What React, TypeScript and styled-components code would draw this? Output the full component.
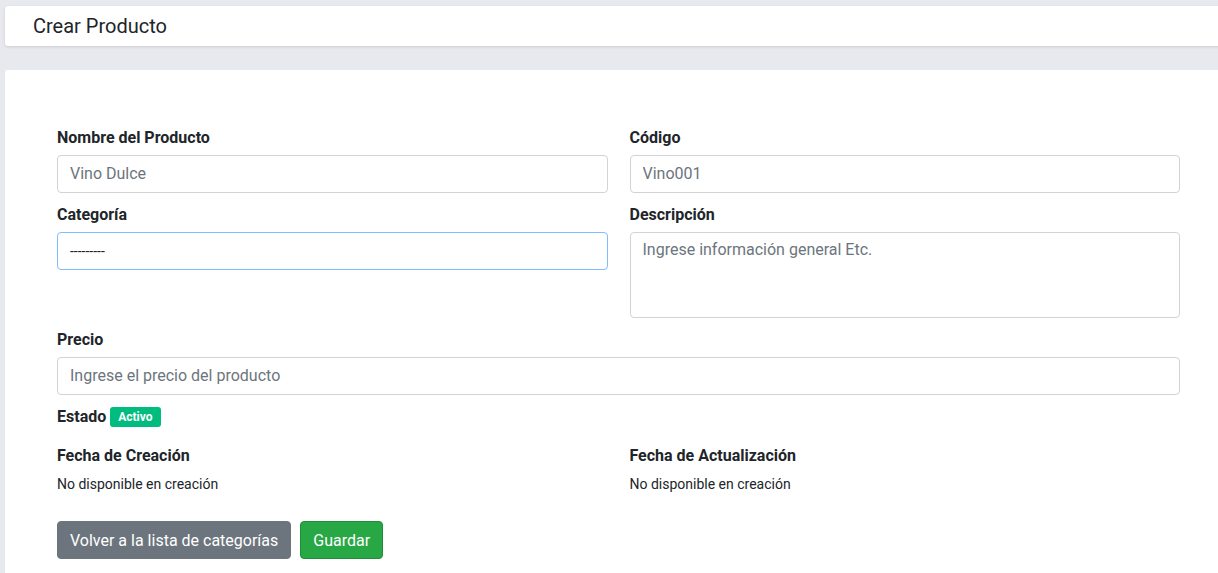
import React from 'react';
import styled, { createGlobalStyle } from 'styled-components';

const GlobalStyle = createGlobalStyle`
  html, body {
    margin: 0;
    padding: 0;
    background: #e8e9ee;
    overflow: hidden;
    font-family: Roboto, "Liberation Sans", sans-serif;
    color: #212529;
  }
`;

const Page = styled.div`
  width: 1226px;
  padding: 6px 0 0 5px;
  display: flex;
  flex-direction: column;
  gap: 24px;
`;

const Header = styled.div`
  background: #fff;
  height: 40px;
  border-radius: 3px;
  box-shadow: 0 1px 3px rgba(0, 0, 0, 0.12);
  display: flex;
  align-items: center;
  padding-left: 28px;

  h1 {
    margin: 0;
    font-size: 20px;
    font-weight: 400;
    color: #212529;
  }
`;

const Card = styled.main`
  background: #fff;
  border-radius: 3px;
  padding: 57px 51px 40px 52px;
  min-height: 500px;
`;

const Grid = styled.div`
  display: grid;
  grid-template-columns: 1fr 1fr;
  column-gap: 22px;
`;

const Field = styled.div<{ $full?: boolean }>`
  display: flex;
  flex-direction: column;
  margin-bottom: 11px;
  grid-column: ${(p) => (p.$full ? '1 / -1' : 'auto')};
`;

const Label = styled.label`
  font-size: 16px;
  font-weight: 700;
  line-height: 22px;
  margin-bottom: 6px;
  display: flex;
  align-items: center;
  gap: 5px;
`;

const Input = styled.input`
  box-sizing: border-box;
  height: 38px;
  padding: 5px 12px 7px;
  font-family: Roboto, "Liberation Sans", sans-serif;
  font-size: 16px;
  color: #495057;
  border: 1px solid #ced4da;
  border-radius: 4px;
  outline: none;
  background: #fff;

  &::placeholder {
    color: #6c757d;
  }
`;

const Select = styled.div`
  box-sizing: border-box;
  height: 38px;
  padding: 0 12px;
  display: flex;
  align-items: center;
  font-size: 14px;
  color: #212529;
  border: 1px solid #80bdff;
  border-radius: 4px;
`;

const TextArea = styled.textarea`
  box-sizing: border-box;
  height: 86px;
  padding: 5px 12px;
  font-family: Roboto, "Liberation Sans", sans-serif;
  font-size: 16px;
  line-height: 24px;
  border: 1px solid #ced4da;
  border-radius: 4px;
  resize: none;
  outline: none;

  &::placeholder {
    color: #6c757d;
  }
`;

const Badge = styled.span`
  background: #00bc7e;
  color: #fff;
  font-size: 12px;
  font-weight: 700;
  padding: 3px 8px;
  border-radius: 3px;
  line-height: 14px;
  margin-left: -1px;
`;

const Info = styled.div`
  display: flex;
  flex-direction: column;

  p {
    margin: 1px 0 0;
    font-size: 14px;
    line-height: 21px;
  }
`;

const Actions = styled.div`
  display: flex;
  gap: 9px;
  margin-top: 26px;
`;

const Button = styled.button<{ $variant: 'secondary' | 'success' }>`
  height: 38px;
  padding: 0 12px;
  font-family: Roboto, "Liberation Sans", sans-serif;
  font-size: 16px;
  color: #fff;
  border-radius: 4px;
  border: 1px solid ${(p) => (p.$variant === 'success' ? '#1e8e3a' : '#6c757d')};
  background: ${(p) => (p.$variant === 'success' ? '#28a745' : '#6c757d')};
`;

const App: React.FC = () => (
  <Page>
    <GlobalStyle />
    <Header>
      <h1>Crear Producto</h1>
    </Header>

    <Card>
      <Grid>
        <Field>
          <Label>Nombre del Producto</Label>
          <Input placeholder="Vino Dulce" />
        </Field>
        <Field>
          <Label>Código</Label>
          <Input placeholder="Vino001" />
        </Field>
        <Field>
          <Label>Categoría</Label>
          <Select>---------</Select>
        </Field>
        <Field>
          <Label>Descripción</Label>
          <TextArea placeholder="Ingrese información general Etc." />
        </Field>
        <Field $full>
          <Label>Precio</Label>
          <Input placeholder="Ingrese el precio del producto" />
        </Field>
        <Field $full>
          <Label>
            Estado <Badge>Activo</Badge>
          </Label>
        </Field>
        <Info>
          <Label>Fecha de Creación</Label>
          <p>No disponible en creación</p>
        </Info>
        <Info>
          <Label>Fecha de Actualización</Label>
          <p>No disponible en creación</p>
        </Info>
      </Grid>

      <Actions>
        <Button $variant="secondary">Volver a la lista de categorías</Button>
        <Button $variant="success">Guardar</Button>
      </Actions>
    </Card>
  </Page>
);

export default App;
